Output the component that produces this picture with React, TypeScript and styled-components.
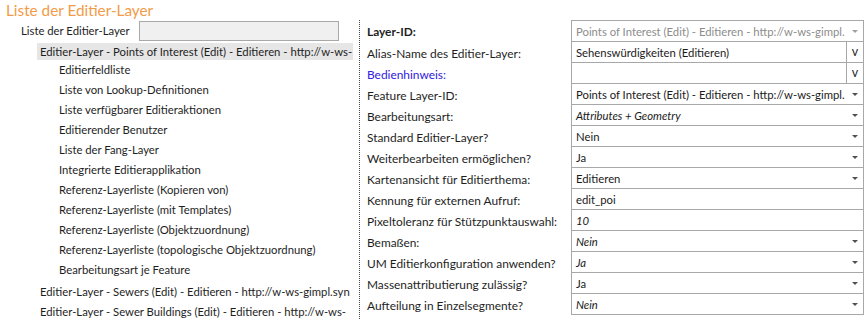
import React from "react";
import styled, { createGlobalStyle } from "styled-components";

const GlobalStyle = createGlobalStyle`
  body {
    margin: 0;
    background: #ffffff;
    font-family: "Lato", "Liberation Sans", sans-serif;
    color: #1e1e1e;
  }
`;

const SPage = styled.div`
  width: 864px;
  height: 319px;
  overflow: hidden;
  display: flex;
  flex-direction: column;
`;

const STitle = styled.div`
  height: 20px;
  line-height: 20px;
  padding-left: 6px;
  font-size: 15.3px;
  color: #f29b48;
  white-space: nowrap;
`;

const SBody = styled.div`
  flex: 1;
  display: flex;
  min-height: 0;
`;

const SLeftPanel = styled.div`
  width: 359px;
  border-right: 1px dotted #444;
  font-size: 11.3px;
  display: flex;
  flex-direction: column;
`;

const SListHeader = styled.div`
  height: 20px;
  display: flex;
  align-items: center;
  padding-left: 21px;

  .caption {
    width: 118px;
    white-space: nowrap;
  }
`;

const SSearchBox = styled.div`
  box-sizing: border-box;
  width: 200px;
  height: 20px;
  margin-top: 2px;
  background: #f0f0f0;
  border: 1px solid #a8a8a8;
`;

const STree = styled.div`
  width: 353px;
  overflow: hidden;
`;

const STreeRow = styled.div<{ $level: number }>`
  height: 20px;
  display: flex;
  align-items: center;
  padding-left: ${(p) => (p.$level === 0 ? 37 : 59)}px;
  white-space: nowrap;
`;

const STreeLabel = styled.span<{ $selected?: boolean }>`
  box-sizing: border-box;
  display: flex;
  align-items: center;
  height: 17px;
  margin-top: 2px;
  padding-left: 3px;
  width: ${(p) => (p.$selected ? "316px" : "auto")};
  background: ${(p) => (p.$selected ? "#e6e6e6" : "transparent")};
`;

const SChildLabel = styled.span`
  margin-top: -1px;
`;

const SForm = styled.div`
  flex: 1;
  display: flex;
  flex-direction: column;
  font-size: 11.9px;
`;

const SFieldRow = styled.div<{ $first?: boolean }>`
  display: grid;
  grid-template-columns: 211px 293px;
  height: ${(p) => (p.$first ? 22 : 21)}px;
`;

const SFieldLabel = styled.div<{ $bold?: boolean; $link?: boolean }>`
  display: flex;
  align-items: center;
  padding-left: 7px;
  padding-top: 1px;
  white-space: nowrap;
  font-weight: ${(p) => (p.$bold ? 700 : 400)};
  color: ${(p) => (p.$link ? "#3020e0" : "#1e1e1e")};
`;

const SValueCell = styled.div<{ $first?: boolean }>`
  box-sizing: border-box;
  display: flex;
  align-items: stretch;
  border: 1px solid #a8a8a8;
  border-top-width: ${(p) => (p.$first ? 1 : 0)}px;
  background: #ffffff;
`;

const SValueText = styled.div<{ $italic?: boolean; $muted?: boolean }>`
  flex: 1;
  min-width: 0;
  display: flex;
  align-items: center;
  padding: 1px 0 0 4px;
  overflow: hidden;
  white-space: nowrap;
  font-size: 11.3px;
  font-style: ${(p) => (p.$italic ? "italic" : "normal")};
  color: ${(p) => (p.$muted ? "#8c8c8c" : "#1a1a1a")};
`;

const SDropArrow = styled.div<{ $muted?: boolean }>`
  width: 17px;
  display: flex;
  align-items: center;
  justify-content: center;

  &::after {
    content: "";
    width: 0;
    height: 0;
    margin-top: 1px;
    border-left: 3px solid transparent;
    border-right: 3px solid transparent;
    border-top: 3px solid ${(p) => (p.$muted ? "#a0a0a0" : "#505050")};
  }
`;

const SZoomButton = styled.div`
  width: 16px;
  border-left: 1px solid #a8a8a8;
  display: flex;
  align-items: center;
  justify-content: center;
  font-size: 12.5px;
  color: #2a2a2a;
  padding-bottom: 1px;
`;

type Kind = "select" | "memo" | "text";

type Field = {
  label: string;
  value: string;
  kind: Kind;
  bold?: boolean;
  link?: boolean;
  italic?: boolean;
  disabled?: boolean;
};

const tree: { text: string; level: number; selected?: boolean }[] = [
  { text: "Editier-Layer - Points of Interest (Edit) - Editieren - http://w-ws-", level: 0, selected: true },
  { text: "Editierfeldliste", level: 1 },
  { text: "Liste von Lookup-Definitionen", level: 1 },
  { text: "Liste verfügbarer Editieraktionen", level: 1 },
  { text: "Editierender Benutzer", level: 1 },
  { text: "Liste der Fang-Layer", level: 1 },
  { text: "Integrierte Editierapplikation", level: 1 },
  { text: "Referenz-Layerliste (Kopieren von)", level: 1 },
  { text: "Referenz-Layerliste (mit Templates)", level: 1 },
  { text: "Referenz-Layerliste (Objektzuordnung)", level: 1 },
  { text: "Referenz-Layerliste (topologische Objektzuordnung)", level: 1 },
  { text: "Bearbeitungsart je Feature", level: 1 },
  { text: "Editier-Layer - Sewers (Edit) - Editieren - http://w-ws-gimpl.syn", level: 0 },
  { text: "Editier-Layer - Sewer Buildings (Edit) - Editieren - http://w-ws-", level: 0 },
];

const layerUrl = "Points of Interest (Edit) - Editieren - http://w-ws-gimpl.";

const fields: Field[] = [
  { label: "Layer-ID:", value: layerUrl, kind: "select", bold: true, disabled: true },
  { label: "Alias-Name des Editier-Layer:", value: "Sehenswürdigkeiten (Editieren)", kind: "memo" },
  { label: "Bedienhinweis:", value: "", kind: "memo", link: true },
  { label: "Feature Layer-ID:", value: layerUrl, kind: "select" },
  { label: "Bearbeitungsart:", value: "Attributes + Geometry", kind: "select", italic: true },
  { label: "Standard Editier-Layer?", value: "Nein", kind: "select" },
  { label: "Weiterbearbeiten ermöglichen?", value: "Ja", kind: "select" },
  { label: "Kartenansicht für Editierthema:", value: "Editieren", kind: "select" },
  { label: "Kennung für externen Aufruf:", value: "edit_poi", kind: "text" },
  { label: "Pixeltoleranz für Stützpunktauswahl:", value: "10", kind: "text", italic: true },
  { label: "Bemaßen:", value: "Nein", kind: "select", italic: true },
  { label: "UM Editierkonfiguration anwenden?", value: "Ja", kind: "select", italic: true },
  { label: "Massenattributierung zulässig?", value: "Ja", kind: "select" },
  { label: "Aufteilung in Einzelsegmente?", value: "Nein", kind: "select", italic: true },
];

const App = () => {
  return (
    <SPage>
      <GlobalStyle />
      <STitle>Liste der Editier-Layer</STitle>
      <SBody>
        <SLeftPanel>
          <SListHeader>
            <span className="caption">Liste der Editier-Layer</span>
            <SSearchBox />
          </SListHeader>
          <STree>
            {tree.map((item) => (
              <STreeRow key={item.text} $level={item.level}>
                {item.level === 0 ? (
                  <STreeLabel $selected={item.selected}>{item.text}</STreeLabel>
                ) : (
                  <SChildLabel>{item.text}</SChildLabel>
                )}
              </STreeRow>
            ))}
          </STree>
        </SLeftPanel>
        <SForm>
          {fields.map((f, i) => (
            <SFieldRow key={f.label} $first={i === 0}>
              <SFieldLabel $bold={f.bold} $link={f.link}>
                {f.label}
              </SFieldLabel>
              <SValueCell $first={i === 0}>
                <SValueText $italic={f.italic} $muted={f.disabled}>
                  {f.value}
                </SValueText>
                {f.kind === "select" && <SDropArrow $muted={f.disabled} />}
                {f.kind === "memo" && <SZoomButton>v</SZoomButton>}
              </SValueCell>
            </SFieldRow>
          ))}
        </SForm>
      </SBody>
    </SPage>
  );
};

export default App;
